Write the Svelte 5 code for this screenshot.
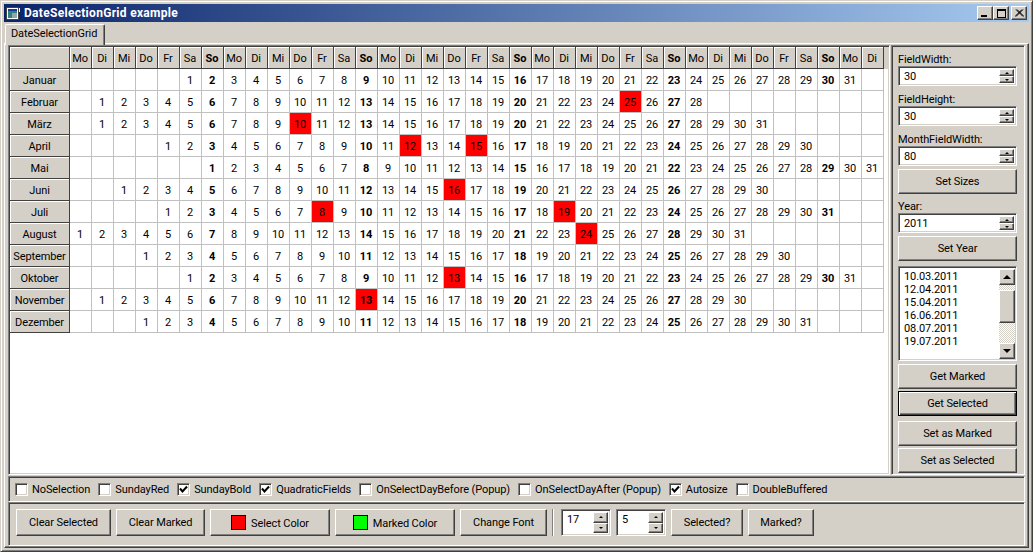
<script lang="ts">
  const dayNames = ["Mo", "Di", "Mi", "Do", "Fr", "Sa", "So"];
  const monthNames = ["Januar", "Februar", "März", "April", "Mai", "Juni", "Juli", "August", "September", "Oktober", "November", "Dezember"];
  const year = 2011;
  const columns = 37;

  // month index -> marked days
  const marked: Record<number, number[]> = {
    1: [25],
    2: [10],
    3: [12, 15],
    5: [16],
    6: [8, 19],
    7: [24],
    9: [13],
    10: [13],
  };

  const header = Array.from({ length: columns }, (_, i) => dayNames[i % 7]);

  const rows = monthNames.map((name, m) => {
    const offset = (new Date(year, m, 1).getDay() + 6) % 7;
    const length = new Date(year, m + 1, 0).getDate();
    const cells = Array.from({ length: columns }, (_, i) => {
      const day = i - offset + 1;
      return {
        day: day >= 1 && day <= length ? day : null,
        sunday: i % 7 === 6,
        marked: (marked[m] ?? []).includes(day),
      };
    });
    return { name, cells };
  });

  const sideList = ["10.03.2011", "12.04.2011", "15.04.2011", "16.06.2011", "08.07.2011", "19.07.2011"];

  const options = [
    { label: "NoSelection", checked: false },
    { label: "SundayRed", checked: false },
    { label: "SundayBold", checked: true },
    { label: "QuadraticFields", checked: true },
    { label: "OnSelectDayBefore (Popup)", checked: false },
    { label: "OnSelectDayAfter (Popup)", checked: false },
    { label: "Autosize", checked: true },
    { label: "DoubleBuffered", checked: false },
  ];
</script>

{#snippet spinner(value: string, tall = false)}
  <div class="spinner" class:tall>
    <span class="spin-value">{value}</span>
    <div class="spin-buttons">
      <div class="raised spin-btn"><i class="arrow up"></i></div>
      <div class="raised spin-btn"><i class="arrow down"></i></div>
    </div>
  </div>
{/snippet}

<div class="window">
  <div class="titlebar">
    <svg class="app-icon" width="15" height="13" viewBox="0 0 15 13">
      <rect x="0.5" y="0.5" width="12" height="12" fill="#fff" stroke="#404040" />
      <rect x="2" y="2" width="9" height="9" fill="#2f7f86" />
      <rect x="2" y="2" width="9" height="2" fill="#1c3c8c" />
      <rect x="6" y="6" width="5" height="5" fill="#8fa8a8" />
      <rect x="13" y="1" width="1" height="4" fill="#fff" />
    </svg>
    <span class="title">DateSelectionGrid example</span>
    <div class="title-buttons">
      <div class="raised cap"><i class="min"></i></div>
      <div class="raised cap"><i class="max"></i></div>
      <div class="raised cap close">
        <svg width="9" height="8" viewBox="0 0 9 8"><path d="M1 0.5 L8 7.5 M8 0.5 L1 7.5 M2 0.5 L9 7.5 M7 0.5 L0 7.5" stroke="#000" fill="none" /></svg>
      </div>
    </div>
  </div>

  <div class="tabs"><div class="tab">DateSelectionGrid</div></div>

  <div class="page">
    <div class="main">
      <div class="sunken grid">
        <div class="row head">
          <div class="fixed month"></div>
          {#each header as name}
            <div class="fixed cell" class:bold={name === "So"}>{name}</div>
          {/each}
        </div>
        {#each rows as row}
          <div class="row">
            <div class="fixed month">{row.name}</div>
            {#each row.cells as c}
              <div class="cell data" class:bold={c.sunday} class:marked={c.marked}>{c.day ?? ""}</div>
            {/each}
          </div>
        {/each}
      </div>

      <div class="sunken side">
        <div class="label">FieldWidth:</div>
        {@render spinner("30")}
        <div class="label">FieldHeight:</div>
        {@render spinner("30")}
        <div class="label">MonthFieldWidth:</div>
        {@render spinner("80")}
        <button class="raised btn set-sizes">Set Sizes</button>
        <div class="label year">Year:</div>
        {@render spinner("2011")}
        <button class="raised btn set-year">Set Year</button>

        <div class="listbox">
          <div class="list-items">
            {#each sideList as item}
              <div>{item}</div>
            {/each}
          </div>
          <div class="scrollbar">
            <div class="raised sb-btn"><i class="arrow up big"></i></div>
            <div class="sb-track">
              <div class="raised sb-thumb"></div>
            </div>
            <div class="raised sb-btn"><i class="arrow down big"></i></div>
          </div>
        </div>

        <button class="raised btn get-marked">Get Marked</button>
        <button class="raised btn default">Get Selected</button>
        <button class="raised btn set-marked">Set as Marked</button>
        <button class="raised btn set-selected">Set as Selected</button>
      </div>
    </div>

    <div class="sunken options">
      {#each options as opt}
        <div class="option">
          <span class="checkbox">
            {#if opt.checked}
              <svg width="9" height="9" viewBox="0 0 9 9"><path d="M1 3.5 L3.5 6.5 L8 1.5" fill="none" stroke="#000" stroke-width="2" /></svg>
            {/if}
          </span>
          <span>{opt.label}</span>
        </div>
      {/each}
    </div>

    <div class="sunken toolbar">
      <button class="raised btn w95">Clear Selected</button>
      <button class="raised btn w89">Clear Marked</button>
      <button class="raised btn w120"><span class="swatch red"></span><span class="swatch-text">Select Color</span></button>
      <button class="raised btn w120"><span class="swatch green"></span><span class="swatch-text">Marked Color</span></button>
      <button class="raised btn w87">Change Font</button>
      <div class="separator"></div>
      {@render spinner("17", true)}
      {@render spinner("5", true)}
      <button class="raised btn w72">Selected?</button>
      <button class="raised btn w66">Marked?</button>
    </div>
  </div>
</div>

<style>
  :global(body) {
    margin: 0;
    background: #d4d0c8;
  }

  .window {
    box-sizing: border-box;
    width: 1033px;
    height: 552px;
    padding: 3px;
    display: flex;
    flex-direction: column;
    background: #d4d0c8;
    border: 1px solid;
    border-color: #d4d0c8 #404040 #404040 #d4d0c8;
    box-shadow: inset 1px 1px #fff, inset -1px -1px #808080;
    font-family: Roboto, "Liberation Sans", sans-serif;
    font-size: 11px;
    letter-spacing: -0.1px;
    color: #000;
    overflow: hidden;
  }

  .raised {
    box-sizing: border-box;
    background: #d4d0c8;
    border: 1px solid;
    border-color: #fff #404040 #404040 #fff;
    box-shadow: inset -1px -1px #808080;
  }

  .sunken {
    box-sizing: border-box;
    border: 1px solid;
    border-color: #808080 #fff #fff #808080;
    box-shadow: inset 1px 1px #404040, inset -1px -1px #d4d0c8;
  }

  .titlebar {
    height: 18px;
    flex: none;
    display: flex;
    align-items: center;
    padding: 0 2px;
    background: linear-gradient(90deg, #0a246a, #a6caf0);
  }

  .app-icon {
    flex: none;
    margin-right: 3px;
  }

  .title {
    color: #fff;
    font-weight: bold;
    font-size: 12px;
    letter-spacing: 0.3px;
    white-space: nowrap;
  }

  .title-buttons {
    margin-left: auto;
    display: flex;
  }

  .cap {
    width: 16px;
    height: 14px;
    position: relative;
    display: flex;
    align-items: center;
    justify-content: center;
  }

  .close {
    margin-left: 2px;
  }

  .min {
    position: absolute;
    left: 3px;
    bottom: 2px;
    width: 6px;
    height: 2px;
    background: #000;
  }

  .max {
    box-sizing: border-box;
    width: 9px;
    height: 9px;
    border: 1px solid #000;
    border-top-width: 2px;
  }

  .tabs {
    height: 21px;
    flex: none;
    display: flex;
    align-items: flex-end;
  }

  .tab {
    box-sizing: border-box;
    position: relative;
    z-index: 1;
    width: 100px;
    height: 21px;
    margin-left: 1px;
    margin-bottom: -2px;
    padding: 2px 0 0 5px;
    line-height: 14px;
    background: #d4d0c8;
    border-top: 1px solid #fff;
    border-left: 1px solid #fff;
    border-right: 1px solid #404040;
    border-radius: 2px 2px 0 0;
    box-shadow: inset -1px 0 #808080;
  }

  .page {
    flex: 1;
    box-sizing: border-box;
    min-height: 0;
    display: flex;
    flex-direction: column;
    padding: 1px 3px 0;
    border: 1px solid;
    border-color: #fff #404040 #404040 #fff;
    box-shadow: inset -1px -1px #808080;
  }

  .main {
    height: 430px;
    flex: none;
    display: flex;
    gap: 1px;
  }

  .grid {
    width: 882px;
    padding: 1px;
    background: #fff;
    overflow: hidden;
  }

  .row {
    display: flex;
    height: 22px;
  }

  .head {
    background: #d4d0c8;
  }

  .cell,
  .month {
    box-sizing: border-box;
    flex: none;
    height: 22px;
    line-height: 23px;
    text-align: center;
    white-space: nowrap;
  }

  .cell {
    width: 22px;
    padding-right: 1px;
  }

  .month {
    width: 60px;
  }

  .fixed {
    background: #d4d0c8;
    border-right: 1px solid #404040;
    border-bottom: 1px solid #404040;
    box-shadow: inset 1px 1px #fff;
  }

  .data {
    border-right: 1px solid #c0c0c0;
    border-bottom: 1px solid #c0c0c0;
  }

  .bold {
    font-weight: bold;
  }

  .marked {
    background: #ff0000;
  }

  .side {
    width: 134px;
    display: flex;
    flex-direction: column;
    padding: 0 7px 0 6px;
  }

  .label {
    box-sizing: border-box;
    height: 14px;
    padding-top: 1px;
    line-height: 14px;
    margin-top: 6px;
    white-space: nowrap;
  }

  .label.year {
    margin-top: 5px;
  }

  .spinner {
    box-sizing: border-box;
    flex: none;
    height: 20px;
    display: flex;
    align-items: stretch;
    background: #fff;
    border: 1px solid;
    border-color: #808080 #fff #fff #808080;
    box-shadow: inset 1px 1px #404040, inset -1px -1px #d4d0c8;
    padding: 2px;
  }

  .spin-value {
    flex: 1;
    padding-left: 3px;
    line-height: 15px;
  }

  .spin-buttons {
    width: 15px;
    display: flex;
    flex-direction: column;
  }

  .spin-btn {
    flex: 1;
    display: flex;
    align-items: center;
    justify-content: center;
  }

  .spinner.tall {
    width: 50px;
    height: 27px;
    align-self: flex-start;
  }

  .arrow {
    width: 0;
    height: 0;
    border-left: 2px solid transparent;
    border-right: 2px solid transparent;
  }

  .arrow.up {
    border-bottom: 2px solid #000;
  }

  .arrow.down {
    border-top: 2px solid #000;
  }

  .arrow.big {
    border-left-width: 4px;
    border-right-width: 4px;
  }

  .arrow.big.up {
    border-bottom-width: 4px;
  }

  .arrow.big.down {
    border-top-width: 4px;
  }

  .btn {
    height: 25px;
    flex: none;
    padding: 0 0 1px;
    font: inherit;
    letter-spacing: inherit;
    color: #000;
    text-align: center;
    white-space: nowrap;
  }

  .set-sizes {
    margin-top: 3px;
  }

  .set-year {
    margin-top: 3px;
  }

  .get-marked {
    margin-top: 3px;
  }

  .default {
    margin-top: 2px;
    border-color: #000;
    box-shadow: inset 1px 1px #fff, inset -1px -1px #404040, inset -2px -2px #808080;
  }

  .set-marked {
    margin-top: 5px;
  }

  .set-selected {
    margin-top: 2px;
  }

  .listbox {
    box-sizing: border-box;
    flex: none;
    margin-top: 5px;
    height: 95px;
    display: flex;
    background: #fff;
    padding: 2px 1px 1px 2px;
    border: 1px solid;
    border-color: #808080 #fff #fff #808080;
    box-shadow: inset 1px 1px #404040, inset -1px -1px #d4d0c8;
  }

  .list-items {
    flex: 1;
    padding: 1px 0 0 3px;
    line-height: 13px;
  }

  .scrollbar {
    width: 16px;
    display: flex;
    flex-direction: column;
  }

  .sb-btn {
    height: 16px;
    flex: none;
    display: flex;
    align-items: center;
    justify-content: center;
  }

  .sb-track {
    flex: 1;
    padding-top: 5px;
    background: conic-gradient(#fff 25%, #d4d0c8 0 50%, #fff 0 75%, #d4d0c8 0) 0 0 / 2px 2px;
  }

  .sb-thumb {
    height: 33px;
  }

  .options {
    height: 26px;
    flex: none;
    margin-top: 1px;
    display: flex;
    align-items: center;
    gap: 8px;
    padding: 1px 0 0 6px;
    white-space: nowrap;
  }

  .option {
    display: flex;
    align-items: center;
    gap: 4px;
  }

  .checkbox {
    box-sizing: border-box;
    width: 13px;
    height: 13px;
    display: flex;
    align-items: center;
    justify-content: center;
    background: #fff;
    border: 1px solid;
    border-color: #808080 #fff #fff #808080;
    box-shadow: inset 1px 1px #404040, inset -1px -1px #d4d0c8;
  }

  .toolbar {
    height: 44px;
    flex: none;
    display: flex;
    align-items: flex-start;
    gap: 5px;
    padding: 6px 0 0 7px;
  }

  .toolbar .btn {
    height: 27px;
    display: flex;
    align-items: center;
    justify-content: center;
  }

  .w95 { width: 95px; }
  .w89 { width: 89px; }
  .w120 { width: 120px; }
  .w87 { width: 87px; }
  .w72 { width: 72px; }
  .w66 { width: 66px; }

  .swatch {
    box-sizing: border-box;
    width: 15px;
    height: 15px;
    border: 1px solid #000;
    margin-right: 5px;
  }

  .swatch.red {
    background: #ff0000;
  }

  .swatch.green {
    background: #00ff00;
  }

  .swatch-text {
    padding-top: 2px;
  }

  .separator {
    width: 2px;
    height: 27px;
    margin-right: 2px;
    background: #808080;
    box-shadow: inset -1px 0 #fff;
  }
</style>
